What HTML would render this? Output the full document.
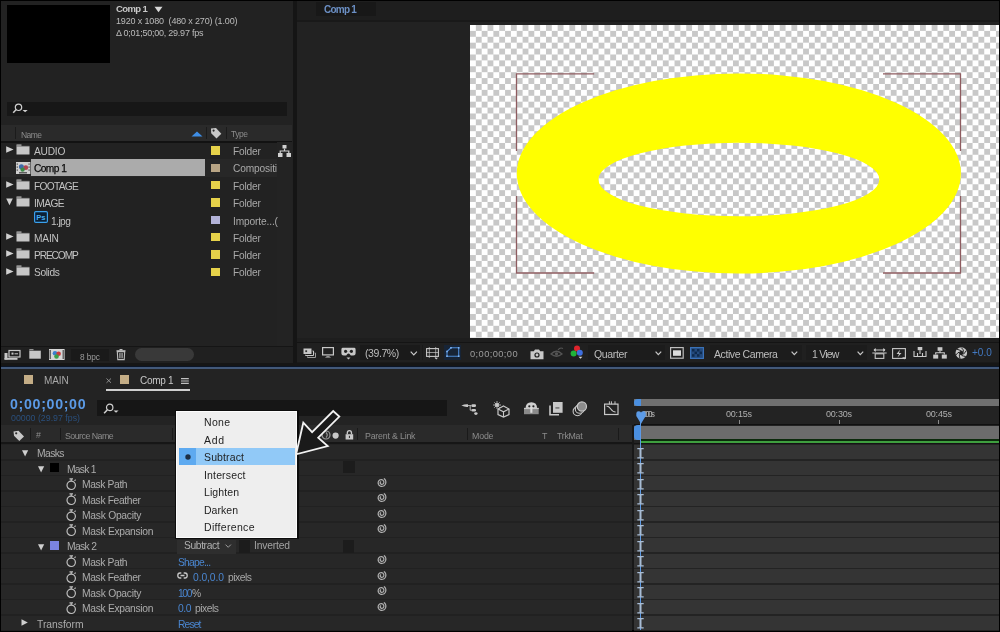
<!DOCTYPE html>
<html><head><meta charset="utf-8">
<style>
*{margin:0;padding:0;box-sizing:border-box}
html,body{width:1000px;height:632px;overflow:hidden;background:#000}
body{position:relative;font-family:"Liberation Sans",sans-serif;color:#b8b8b8}
.a{position:absolute}
.t{position:absolute;white-space:nowrap;line-height:1;will-change:transform}
svg{overflow:visible}
</style></head><body>
<div class="a" style="left:0px;top:0px;width:1000px;height:632px;background:#000;"></div>
<div class="a" style="left:1px;top:1px;width:998px;height:629px;background:#191919;"></div>
<div class="a" style="left:1px;top:1px;width:292px;height:365px;background:#222;"></div>
<div class="a" style="left:7px;top:5px;width:103px;height:58px;background:#000;"></div>
<div class="t" style="left:115.7px;top:3.96px;font-size:9.5px;color:#c8c8c8;font-weight:bold;letter-spacing:-0.609px;">Comp 1</div>
<svg class="a" style="left:154px;top:6px" width="9" height="7" viewBox="0 0 9 7"><path d="M0.5 0.8 L8.5 0.8 L4.5 6.3Z" fill="#d8d8d8"/></svg>
<div class="t" style="left:115.7px;top:17.48px;font-size:9px;color:#bcbcbc;letter-spacing:-0.153px;">1920 x 1080&nbsp; (480 x 270) (1.00)</div>
<div class="t" style="left:115.7px;top:29.28px;font-size:9px;color:#bcbcbc;letter-spacing:-0.232px;">&Delta; 0;01;50;00, 29.97 fps</div>
<div class="a" style="left:7px;top:101.5px;width:280px;height:14.6px;background:#171717;"></div>
<svg class="a" style="left:12px;top:103px" width="16" height="12" viewBox="0 0 16 12"><circle cx="6.5" cy="4.3" r="3.2" fill="none" stroke="#cfcfcf" stroke-width="1.2"/><path d="M4.2 6.6 L1.2 9.8" stroke="#cfcfcf" stroke-width="1.5"/><path d="M10.5 7 L15.7 7 L13.1 9.3Z" fill="#cfcfcf"/></svg>
<div class="a" style="left:1px;top:125px;width:291px;height:16px;background:#2a2a2a;"></div>
<div class="a" style="left:1px;top:141px;width:291px;height:1.5px;background:#121212;"></div>
<div class="a" style="left:15px;top:127px;width:1px;height:12px;background:#1b1b1b;"></div>
<div class="t" style="left:21px;top:130.50px;font-size:8.5px;color:#8c8c8c;letter-spacing:-0.562px;">Name</div>
<svg class="a" style="left:191px;top:131px" width="12" height="6" viewBox="0 0 12 6"><path d="M0.5 5.5 L6 0.5 L11.5 5.5Z" fill="#3f8ee6"/></svg>
<div class="a" style="left:205.5px;top:127px;width:1px;height:12px;background:#1b1b1b;"></div>
<svg class="a" style="left:210px;top:127px" width="12" height="12" viewBox="0 0 12 12"><path d="M1 1.5 L6 1 L11.3 6.8 L6.5 11.5 L1.2 6.2Z" fill="#c8c8c8"/><circle cx="3.6" cy="3.6" r="1.1" fill="#2a2a2a"/></svg>
<div class="a" style="left:225.5px;top:127px;width:1px;height:12px;background:#1b1b1b;"></div>
<div class="t" style="left:231px;top:129.60px;font-size:8.5px;color:#8c8c8c;letter-spacing:-0.479px;">Type</div>
<div class="a" style="left:277px;top:142px;width:15px;height:204px;background:#232323;"></div>
<svg class="a" style="left:5.5px;top:146.45000000000002px" width="8" height="8" viewBox="0 0 8 8"><path d="M0.2 0.3 L7.6 3.5 L0.2 6.7Z" fill="#d0d0d0"/></svg>
<svg class="a" style="left:16px;top:144.15px" width="14" height="11" viewBox="0 0 14 11"><path d="M0.5 0.5 H5.5 V2.2 H0.5Z" fill="#c6c6c6"/><rect x="0.5" y="2.2" width="13" height="8.3" fill="#c6c6c6"/><rect x="0.5" y="1.6" width="13" height="0.6" fill="#444"/></svg>
<div class="t" style="left:34.2px;top:146.97px;font-size:10.2px;color:#c2c2c2;letter-spacing:-0.241px;">AUDIO</div>
<div class="a" style="left:211px;top:146.45000000000002px;width:8.6px;height:8.4px;background:#e6d24a;"></div>
<div class="t" style="left:232.5px;top:146.97px;font-size:10.2px;color:#a8a8a8;letter-spacing:-0.198px;">Folder</div>
<div class="a" style="left:1px;top:159.3px;width:276px;height:17.3px;background:#272727;"></div>
<div class="a" style="left:31px;top:159.3px;width:174px;height:16.4px;background:#ababab;"></div>
<svg class="a" style="left:15.8px;top:161.8px" width="14.4" height="12" viewBox="0 0 14.4 12"><rect x="0" y="0" width="14.4" height="12" fill="#cfcfcf"/><g fill="#555"><rect x="0.6" y="1.5" width="1.4" height="1.2"/><rect x="0.6" y="4.5" width="1.4" height="1.2"/><rect x="0.6" y="7.5" width="1.4" height="1.2"/><rect x="12.4" y="1.5" width="1.4" height="1.2"/><rect x="12.4" y="4.5" width="1.4" height="1.2"/><rect x="12.4" y="7.5" width="1.4" height="1.2"/></g><circle cx="5.4" cy="4.7" r="2.5" fill="#3d6aa8"/><circle cx="9.8" cy="5.7" r="2.4" fill="#b04550"/><circle cx="6.6" cy="7.6" r="2.2" fill="#3c8a45"/><rect x="3" y="10.2" width="8" height="1.2" fill="#444"/></svg>
<div class="t" style="left:34.2px;top:164.27px;font-size:10.2px;color:#0a0a0a;-webkit-text-stroke:0.25px #0a0a0a;letter-spacing:-0.574px;">Comp 1</div>
<div class="a" style="left:211px;top:163.75000000000003px;width:8.6px;height:8.4px;background:#b9a585;"></div>
<div class="t" style="left:232.5px;top:164.27px;font-size:10.2px;color:#a8a8a8;letter-spacing:-0.150px;">Compositi</div>
<svg class="a" style="left:5.5px;top:181.05px" width="8" height="8" viewBox="0 0 8 8"><path d="M0.2 0.3 L7.6 3.5 L0.2 6.7Z" fill="#d0d0d0"/></svg>
<svg class="a" style="left:16px;top:178.75px" width="14" height="11" viewBox="0 0 14 11"><path d="M0.5 0.5 H5.5 V2.2 H0.5Z" fill="#c6c6c6"/><rect x="0.5" y="2.2" width="13" height="8.3" fill="#c6c6c6"/><rect x="0.5" y="1.6" width="13" height="0.6" fill="#444"/></svg>
<div class="t" style="left:34.2px;top:181.87px;font-size:10.2px;color:#c2c2c2;letter-spacing:-0.710px;">FOOTAGE</div>
<div class="a" style="left:211px;top:181.05px;width:8.6px;height:8.4px;background:#e6d24a;"></div>
<div class="t" style="left:232.5px;top:181.87px;font-size:10.2px;color:#a8a8a8;letter-spacing:-0.198px;">Folder</div>
<svg class="a" style="left:6px;top:198.05px" width="8" height="8" viewBox="0 0 8 8"><path d="M0.2 0.5 L6.8 0.5 L3.5 7.2Z" fill="#d0d0d0"/></svg>
<svg class="a" style="left:16px;top:196.05px" width="14" height="11" viewBox="0 0 14 11"><path d="M0.5 0.5 H5.5 V2.2 H0.5Z" fill="#c6c6c6"/><rect x="0.5" y="2.2" width="13" height="8.3" fill="#c6c6c6"/><rect x="0.5" y="1.6" width="13" height="0.6" fill="#444"/></svg>
<div class="t" style="left:34.2px;top:199.27px;font-size:10.2px;color:#c2c2c2;letter-spacing:-0.561px;">IMAGE</div>
<div class="a" style="left:211px;top:198.35000000000002px;width:8.6px;height:8.4px;background:#e6d24a;"></div>
<div class="t" style="left:232.5px;top:199.27px;font-size:10.2px;color:#a8a8a8;letter-spacing:-0.198px;">Folder</div>
<svg class="a" style="left:34px;top:211.2px" width="14" height="12" viewBox="0 0 14 12"><rect x="0.6" y="0.6" width="12.8" height="10.8" rx="1.2" fill="#0b2035" stroke="#3aa0ec" stroke-width="1.2"/><text x="2.2" y="8.9" font-size="7.6" font-family="Liberation Sans" font-weight="bold" fill="#48aef2">Ps</text></svg>
<div class="t" style="left:50.6px;top:216.57px;font-size:10.2px;color:#c2c2c2;letter-spacing:-0.548px;">1.jpg</div>
<div class="a" style="left:211px;top:215.65px;width:8.6px;height:8.4px;background:#b3b3d8;"></div>
<div class="t" style="left:232.5px;top:216.57px;font-size:10.2px;color:#a8a8a8;letter-spacing:-0.142px;">Importe...(</div>
<svg class="a" style="left:5.5px;top:232.95000000000002px" width="8" height="8" viewBox="0 0 8 8"><path d="M0.2 0.3 L7.6 3.5 L0.2 6.7Z" fill="#d0d0d0"/></svg>
<svg class="a" style="left:16px;top:230.65px" width="14" height="11" viewBox="0 0 14 11"><path d="M0.5 0.5 H5.5 V2.2 H0.5Z" fill="#c6c6c6"/><rect x="0.5" y="2.2" width="13" height="8.3" fill="#c6c6c6"/><rect x="0.5" y="1.6" width="13" height="0.6" fill="#444"/></svg>
<div class="t" style="left:34.2px;top:233.87px;font-size:10.2px;color:#c2c2c2;letter-spacing:-0.190px;">MAIN</div>
<div class="a" style="left:211px;top:232.95000000000002px;width:8.6px;height:8.4px;background:#e6d24a;"></div>
<div class="t" style="left:232.5px;top:233.87px;font-size:10.2px;color:#a8a8a8;letter-spacing:-0.198px;">Folder</div>
<svg class="a" style="left:5.5px;top:250.25000000000003px" width="8" height="8" viewBox="0 0 8 8"><path d="M0.2 0.3 L7.6 3.5 L0.2 6.7Z" fill="#d0d0d0"/></svg>
<svg class="a" style="left:16px;top:247.95000000000002px" width="14" height="11" viewBox="0 0 14 11"><path d="M0.5 0.5 H5.5 V2.2 H0.5Z" fill="#c6c6c6"/><rect x="0.5" y="2.2" width="13" height="8.3" fill="#c6c6c6"/><rect x="0.5" y="1.6" width="13" height="0.6" fill="#444"/></svg>
<div class="t" style="left:34.2px;top:251.17px;font-size:10.2px;color:#c2c2c2;letter-spacing:-1.119px;">PRECOMP</div>
<div class="a" style="left:211px;top:250.25000000000003px;width:8.6px;height:8.4px;background:#e6d24a;"></div>
<div class="t" style="left:232.5px;top:251.17px;font-size:10.2px;color:#a8a8a8;letter-spacing:-0.198px;">Folder</div>
<svg class="a" style="left:5.5px;top:267.55px" width="8" height="8" viewBox="0 0 8 8"><path d="M0.2 0.3 L7.6 3.5 L0.2 6.7Z" fill="#d0d0d0"/></svg>
<svg class="a" style="left:16px;top:265.25px" width="14" height="11" viewBox="0 0 14 11"><path d="M0.5 0.5 H5.5 V2.2 H0.5Z" fill="#c6c6c6"/><rect x="0.5" y="2.2" width="13" height="8.3" fill="#c6c6c6"/><rect x="0.5" y="1.6" width="13" height="0.6" fill="#444"/></svg>
<div class="t" style="left:34.2px;top:268.47px;font-size:10.2px;color:#c2c2c2;letter-spacing:-0.390px;">Solids</div>
<div class="a" style="left:211px;top:267.55px;width:8.6px;height:8.4px;background:#e6d24a;"></div>
<div class="t" style="left:232.5px;top:268.47px;font-size:10.2px;color:#a8a8a8;letter-spacing:-0.198px;">Folder</div>
<svg class="a" style="left:278px;top:144.6px" width="13" height="12" viewBox="0 0 13 12"><rect x="4.5" y="0" width="4" height="3.5" fill="#d0d0d0"/><rect x="0" y="8" width="4.5" height="4" fill="#d0d0d0"/><rect x="8.5" y="8" width="4.5" height="4" fill="#d0d0d0"/><path d="M6.5 3.5 V6 M2.2 8 V6 H10.8 V8" stroke="#d0d0d0" stroke-width="1.2" fill="none"/></svg>
<div class="a" style="left:1px;top:346px;width:292px;height:1.2px;background:#151515;"></div>
<div class="a" style="left:1px;top:347px;width:292px;height:16px;background:#202020;"></div>
<svg class="a" style="left:3.6px;top:350px" width="17" height="10" viewBox="0 0 17 10"><rect x="5" y="0.5" width="11" height="6.5" fill="none" stroke="#c8c8c8" stroke-width="1.2"/><rect x="7.5" y="2.6" width="2" height="2" fill="#c8c8c8"/><rect x="10.5" y="3.3" width="3.5" height="1" fill="#c8c8c8"/><rect x="0.5" y="3" width="3" height="6.5" fill="#c8c8c8"/><rect x="0.5" y="8" width="13" height="1.8" fill="#c8c8c8"/></svg>
<svg class="a" style="left:28.8px;top:349.4px" width="12" height="10" viewBox="0 0 12 10"><path d="M0.3 0.3 H4.5 V1.5 H0.3Z" fill="#c8c8c8"/><rect x="0.3" y="1.5" width="11.5" height="8.2" fill="#c8c8c8"/><rect x="0.3" y="1.3" width="11.5" height="0.5" fill="#333"/></svg>
<svg class="a" style="left:49.2px;top:349px" width="16" height="11" viewBox="0 0 16 11"><rect x="0" y="0" width="15.6" height="11" fill="#d6d6d6"/><rect x="0.5" y="1" width="1.5" height="9" fill="#666"/><rect x="13.5" y="1" width="1.5" height="9" fill="#666"/><circle cx="6" cy="4.3" r="2.3" fill="#3a7fd0"/><circle cx="9.6" cy="4.8" r="2.3" fill="#cc3b3b"/><circle cx="7.5" cy="7.5" r="2.3" fill="#3aa04a"/></svg>
<div class="a" style="left:71.4px;top:348.8px;width:38px;height:12px;background:#1a1a1a;"></div>
<div class="t" style="left:79.8px;top:353.17px;font-size:8.3px;color:#9a9a9a;letter-spacing:-0.124px;">8 bpc</div>
<svg class="a" style="left:116px;top:349px" width="10" height="11" viewBox="0 0 10 11"><rect x="0.5" y="1.2" width="9" height="1.2" fill="#bdbdbd"/><rect x="3.5" y="0" width="3" height="1.4" fill="#bdbdbd"/><path d="M1.3 2.6 H8.7 L8.2 10.6 H1.8Z" fill="none" stroke="#bdbdbd" stroke-width="1.1"/><path d="M3.7 4 V9.3 M5 4 V9.3 M6.3 4 V9.3" stroke="#bdbdbd" stroke-width="0.8"/></svg>
<div class="a" style="left:135px;top:348px;width:59px;height:13px;background:#393939;border-radius:6.5px;"></div>
<div class="a" style="left:293px;top:1px;width:4px;height:365px;background:#151515;"></div>
<div class="a" style="left:297px;top:1px;width:702px;height:365px;background:#222;"></div>
<div class="a" style="left:297px;top:1px;width:702px;height:19px;background:#1e1e1e;"></div>
<div class="a" style="left:297px;top:20px;width:702px;height:2px;background:#191919;"></div>
<div class="a" style="left:316px;top:1.5px;width:60px;height:14px;background:#181818;"></div>
<div class="t" style="left:323.7px;top:4.84px;font-size:10px;color:#6b8fc4;font-weight:bold;letter-spacing:-0.754px;">Comp 1</div>
<div class="a" style="left:469.5px;top:25px;width:529.5px;height:313px;background:#fff;background-image:conic-gradient(#c8c8c8 0 25%,#fff 0 50%,#c8c8c8 0 75%,#fff 0);background-size:11.7px 11.8px;background-position:0 0;"></div>
<svg class="a" style="left:0px;top:0px" width="1000" height="632" viewBox="0 0 1000 632"><g fill="none" stroke="#8e5c60" stroke-width="1.3">
<path d="M516.5 151 V73.9 H594.2"/><path d="M883 73.9 H960.5 V151"/>
<path d="M516.5 196 V273 H594.2"/><path d="M883 273 H960.5 V196"/></g>
<path fill="#ffff00" fill-rule="evenodd" d="M516.8 173.5 A222 100 0 1 0 960.9 173.5 A222 100 0 1 0 516.8 173.5Z M598.4 179.5 A140.45 36.8 0 1 0 879.3 179.5 A140.45 36.8 0 1 0 598.4 179.5Z"/></svg>
<div class="a" style="left:297px;top:338px;width:702px;height:4px;background:#1e1e1e;"></div>
<div class="a" style="left:297px;top:341.5px;width:702px;height:1.5px;background:#141414;"></div>
<div class="a" style="left:297px;top:343px;width:702px;height:19px;background:#202020;"></div>
<div class="a" style="left:297px;top:362px;width:702px;height:4px;background:#1a1a1a;"></div>
<svg class="a" style="left:302.5px;top:347.5px" width="13" height="10" viewBox="0 0 13 10"><rect x="0.5" y="0.5" width="8" height="5.5" fill="#c8c8c8"/><rect x="2.3" y="2.3" width="1.8" height="1.8" fill="#333"/><path d="M9.5 3 H10.5 V7.5 H2.5 V6.8" fill="none" stroke="#c8c8c8" stroke-width="1"/><path d="M11.5 5 H12.5 V9.5 H4.5 V8.5" fill="none" stroke="#9a9a9a" stroke-width="1"/></svg>
<svg class="a" style="left:322px;top:346.5px" width="12" height="11" viewBox="0 0 12 11"><rect x="0.6" y="0.6" width="10.8" height="7.3" fill="none" stroke="#c8c8c8" stroke-width="1.2"/><path d="M3 10.5 Q6 8.2 9 10.5Z" fill="#c8c8c8"/></svg>
<svg class="a" style="left:341px;top:347px" width="15" height="13" viewBox="0 0 15 13"><path d="M1.5 0.8 H13.5 Q14.6 0.8 14.6 2.5 V6.5 Q14.6 8.6 12.3 8.6 H9.8 L8.8 7.2 Q7.5 6 6.2 7.2 L5.2 8.6 H2.7 Q0.4 8.6 0.4 6.5 V2.5 Q0.4 0.8 1.5 0.8Z" fill="#c8c8c8"/><circle cx="4.6" cy="4.3" r="1.6" fill="#222"/><circle cx="10.4" cy="4.3" r="1.6" fill="#222"/><path d="M5.5 10.6 H9.5 L7.5 12.6Z" fill="#c8c8c8"/></svg>
<div class="a" style="left:359.8px;top:345.2px;width:60.6px;height:15px;background:#1a1a1a;"></div>
<div class="t" style="left:364.6px;top:348.31px;font-size:10.5px;color:#bdbdbd;letter-spacing:-0.428px;">(39.7%)</div>
<svg class="a" style="left:410px;top:351px" width="8" height="5" viewBox="0 0 8 5"><path d="M0.7 0.7 L3.8 3.8 L6.9 0.7" fill="none" stroke="#c8c8c8" stroke-width="1.2"/></svg>
<div class="a" style="left:422px;top:345px;width:1px;height:15px;background:#1a1a1a;"></div>
<svg class="a" style="left:425.8px;top:347px" width="13" height="13" viewBox="0 0 13 13"><rect x="0.6" y="1.6" width="11.8" height="7.8" fill="none" stroke="#c8c8c8" stroke-width="1.1"/><path d="M3.3 0 V11 M9.7 0 V11 M0 5.5 H13" stroke="#c8c8c8" stroke-width="0.7" fill="none"/><path d="M8.5 10.8 H12 L10.25 12.6Z" fill="#c8c8c8"/></svg>
<div class="a" style="left:443.8px;top:345.2px;width:17.4px;height:15px;background:#172436;"></div>
<svg class="a" style="left:446px;top:347px" width="14" height="10" viewBox="0 0 14 10"><path d="M1 9.2 V4.5 L5 0.8 H12.7 V9.2Z" fill="none" stroke="#4c8ad8" stroke-width="1.1"/><g fill="#7fb4f0"><rect x="0.2" y="8.4" width="1.6" height="1.6"/><rect x="0.2" y="3.7" width="1.6" height="1.6"/><rect x="4.2" y="0" width="1.6" height="1.6"/><rect x="11.9" y="0" width="1.6" height="1.6"/><rect x="11.9" y="8.4" width="1.6" height="1.6"/></g></svg>
<div class="t" style="left:469.9px;top:349.73px;font-size:9.3px;color:#9c9c9c;letter-spacing:0.405px;">0;00;00;00</div>
<svg class="a" style="left:530px;top:348.5px" width="14" height="10.5" viewBox="0 0 14 10.5"><path d="M0.5 2.3 H3.8 L5 0.5 H9 L10.2 2.3 H13.5 V10.2 H0.5Z" fill="#c8c8c8"/><circle cx="7" cy="6" r="2.6" fill="#202020"/><circle cx="7" cy="6" r="1.4" fill="#c8c8c8"/></svg>
<svg class="a" style="left:549.7px;top:347px" width="14" height="11" viewBox="0 0 14 11"><path d="M1 7 Q6.5 1.5 12 7 Q6.5 11.5 1 7Z" fill="none" stroke="#555" stroke-width="1.3"/><circle cx="6.5" cy="6.8" r="1.6" fill="#555"/><path d="M8 3 Q10 0 13 1.5" fill="none" stroke="#555" stroke-width="1.2"/></svg>
<svg class="a" style="left:570px;top:345px" width="14" height="14" viewBox="0 0 14 14"><circle cx="7" cy="3.6" r="3" fill="#e0242c"/><circle cx="3.6" cy="8.4" r="3" fill="#21b339"/><circle cx="9.8" cy="7.8" r="3" fill="#3f6fe0"/><path d="M8.6 11.8 H12.4 L10.5 13.8Z" fill="#d8d8d8"/></svg>
<div class="a" style="left:587.8px;top:345px;width:77px;height:14.7px;background:#1c1c1c;"></div>
<div class="t" style="left:594.1px;top:348.71px;font-size:10.5px;color:#bdbdbd;letter-spacing:-0.335px;">Quarter</div>
<svg class="a" style="left:655px;top:351.3px" width="7" height="5" viewBox="0 0 7 5"><path d="M0.6 0.6 L3.3 3.6 L6.2 0.6" fill="none" stroke="#c8c8c8" stroke-width="1.2"/></svg>
<svg class="a" style="left:669.7px;top:347.1px" width="14" height="12" viewBox="0 0 14 12"><rect x="0.6" y="0.6" width="12.6" height="10.6" fill="none" stroke="#bdbdbd" stroke-width="1.2"/><rect x="3" y="3.3" width="8" height="5.5" fill="#dcdcdc"/></svg>
<svg class="a" style="left:690px;top:347px" width="14" height="12" viewBox="0 0 14 12"><rect x="0" y="0" width="14" height="12" fill="#244a7c"/><rect x="0.6" y="0.6" width="12.8" height="10.8" fill="none" stroke="#3c74bc" stroke-width="1.1"/><g fill="#0e2a4e"><rect x="2" y="2" width="2.5" height="2.5"/><rect x="7" y="2" width="2.5" height="2.5"/><rect x="4.5" y="4.6" width="2.5" height="2.5"/><rect x="9.5" y="4.6" width="2.5" height="2.5"/><rect x="2" y="7.2" width="2.5" height="2.5"/><rect x="7" y="7.2" width="2.5" height="2.5"/></g></svg>
<div class="a" style="left:710px;top:344.8px;width:92px;height:15.2px;background:#1c1c1c;"></div>
<div class="t" style="left:713.5px;top:348.71px;font-size:10.5px;color:#bdbdbd;letter-spacing:-0.422px;">Active Camera</div>
<svg class="a" style="left:791px;top:351.3px" width="7" height="5" viewBox="0 0 7 5"><path d="M0.6 0.6 L3.3 3.6 L6.2 0.6" fill="none" stroke="#c8c8c8" stroke-width="1.2"/></svg>
<div class="a" style="left:806px;top:344.8px;width:60.6px;height:15.2px;background:#1c1c1c;"></div>
<div class="t" style="left:812px;top:348.71px;font-size:10.5px;color:#bdbdbd;letter-spacing:-0.786px;">1 View</div>
<svg class="a" style="left:857.2px;top:351.3px" width="7" height="5" viewBox="0 0 7 5"><path d="M0.6 0.6 L3.3 3.6 L6.2 0.6" fill="none" stroke="#c8c8c8" stroke-width="1.2"/></svg>
<svg class="a" style="left:872.2px;top:347.6px" width="15" height="11" viewBox="0 0 15 11"><path d="M2 2 H13 M2 2 L3.8 0.6 M2 2 L3.8 3.4 M13 2 L11.2 0.6 M13 2 L11.2 3.4" stroke="#c8c8c8" stroke-width="1.1" fill="none"/><path d="M0.3 5 H14.7" stroke="#c8c8c8" stroke-width="1"/><rect x="3.2" y="5.8" width="8.6" height="4.6" fill="none" stroke="#c8c8c8" stroke-width="1.1"/></svg>
<svg class="a" style="left:892px;top:347.6px" width="15" height="12" viewBox="0 0 15 12"><rect x="0.6" y="0.6" width="12.8" height="9.8" fill="none" stroke="#c8c8c8" stroke-width="1.1"/><path d="M8 1.8 L4.5 6 H7 L5.5 9.5 L9.5 5 H7Z" fill="#c8c8c8"/><path d="M10.2 9.2 H14.2 L12.2 11.4Z" fill="#c8c8c8"/></svg>
<svg class="a" style="left:912.6px;top:347.2px" width="14" height="11" viewBox="0 0 14 11"><rect x="4.7" y="0" width="4.6" height="3.2" fill="#c8c8c8"/><path d="M7 3.2 V7 M1 4 V9.5 H13 V4 M4.5 6 V9.5 M9.5 6 V9.5" stroke="#c8c8c8" stroke-width="1.1" fill="none"/></svg>
<svg class="a" style="left:933px;top:346.6px" width="14" height="12" viewBox="0 0 14 12"><rect x="4.6" y="0.2" width="4.8" height="3.6" fill="#c8c8c8"/><rect x="0.2" y="7.6" width="5" height="4" fill="#c8c8c8"/><rect x="8.8" y="7.6" width="5" height="4" fill="#c8c8c8"/><path d="M7 3.8 V5.7 M2.7 7.6 V5.7 H11.3 V7.6" stroke="#c8c8c8" stroke-width="1.1" fill="none"/></svg>
<svg class="a" style="left:955px;top:347.4px" width="13" height="12" viewBox="0 0 13 12"><circle cx="6.3" cy="6" r="5.8" fill="#c8c8c8"/><g fill="none" stroke="#202020" stroke-width="1"><path d="M6.3 0.6 Q8.6 2.6 8.6 4.6"/><path d="M11.3 3.5 Q10.2 6 8.4 7"/><path d="M10.8 9.5 Q8.2 9.2 6.6 8.4"/><path d="M5 11.5 Q4.2 9 4.3 7.6"/><path d="M0.8 8 Q2.6 5.8 4 5.2"/><path d="M1.8 2.2 Q4.4 3 5.8 3.6"/></g><path d="M6.3 3.6 L8.6 4.8 L8.5 7.1 L6.5 8.3 L4.2 7.4 L4.1 5Z" fill="#202020"/></svg>
<div class="t" style="left:972px;top:348.34px;font-size:10px;color:#4279c2;letter-spacing:0.017px;">+0.0</div>
<div class="a" style="left:1px;top:363px;width:998px;height:2.7px;background:#161616;"></div>
<div class="a" style="left:1px;top:365.7px;width:998px;height:1.2px;background:#0b1526;"></div>
<div class="a" style="left:1px;top:366.9px;width:998px;height:1.7px;background:#43597a;"></div>
<div class="a" style="left:1px;top:368.9px;width:998px;height:2.5px;background:#1d1f23;"></div>
<div class="a" style="left:1px;top:368.5px;width:998px;height:261.5px;background:#232323;"></div>
<div class="a" style="left:24px;top:375px;width:9.2px;height:9px;background:#c4ad86;"></div>
<div class="t" style="left:44.4px;top:375.94px;font-size:10px;color:#a8a8a8;letter-spacing:-0.133px;">MAIN</div>
<svg class="a" style="left:105.8px;top:378.2px" width="6" height="5" viewBox="0 0 6 5"><path d="M0.5 0.5 L5 4.8 M5 0.5 L0.5 4.8" stroke="#9a9a9a" stroke-width="0.9"/></svg>
<div class="a" style="left:120px;top:375px;width:9.2px;height:9px;background:#c4ad86;"></div>
<div class="t" style="left:140px;top:375.54px;font-size:10px;color:#c8c8c8;letter-spacing:-0.283px;">Comp 1</div>
<svg class="a" style="left:181.4px;top:378.2px" width="8" height="6" viewBox="0 0 8 6"><path d="M0 0.6 H7.8 M0 3 H7.8 M0 5.4 H7.8" stroke="#c0c0c0" stroke-width="1.1"/></svg>
<div class="a" style="left:105.8px;top:389.2px;width:84.6px;height:2px;background:#cfcfcf;"></div>
<div class="t" style="left:10.2px;top:396.98px;font-size:14.2px;color:#5b9ae6;font-weight:bold;letter-spacing:0.686px;">0;00;00;00</div>
<div class="t" style="left:10.8px;top:413.55px;font-size:8.8px;color:#2a4f7c;letter-spacing:0.002px;">00000 (29.97 fps)</div>
<div class="a" style="left:96.6px;top:400.2px;width:350.4px;height:16.2px;background:#161616;"></div>
<svg class="a" style="left:102.6px;top:402.6px" width="16" height="11" viewBox="0 0 16 11"><circle cx="6.7" cy="4.4" r="3.2" fill="none" stroke="#cfcfcf" stroke-width="1.2"/><path d="M4.4 6.7 L1.1 10.3" stroke="#cfcfcf" stroke-width="1.5"/><path d="M10.5 7.4 L15.6 7.4 L13.05 9.7Z" fill="#cfcfcf"/></svg>
<svg class="a" style="left:461px;top:403px" width="18" height="13" viewBox="0 0 18 13"><path d="M0.4 2.6 Q4 0.9 7 1.3 V3.9 Q4 4.3 0.4 2.6Z" fill="#c8c8c8"/><rect x="10.4" y="1.3" width="4.6" height="2.6" rx="1.2" fill="#c8c8c8"/><path d="M7 2.6 H10.4 M9.2 2.6 V7.2 H10.4" stroke="#c8c8c8" stroke-width="0.9" fill="none"/><rect x="10.4" y="5.9" width="4.6" height="2.6" rx="1.2" fill="#c8c8c8"/><ellipse cx="14.9" cy="10.6" rx="1.7" ry="1.3" fill="#c8c8c8"/></svg>
<svg class="a" style="left:492.8px;top:400.7px" width="17" height="16" viewBox="0 0 17 16"><circle cx="4" cy="4" r="2" fill="#c8c8c8"/><path d="M4 0 V8 M0 4 H8 M1.3 1.3 L6.7 6.7 M6.7 1.3 L1.3 6.7" stroke="#c8c8c8" stroke-width="0.8"/><path d="M10.5 5 L16 8 V13.5 L10.5 16 L5 13.5 V8Z" fill="none" stroke="#c8c8c8" stroke-width="1.2"/><path d="M5 8 L10.5 10.8 L16 8 M10.5 10.8 V16" fill="none" stroke="#c8c8c8" stroke-width="1.1"/></svg>
<svg class="a" style="left:524.4px;top:401.8px" width="15" height="13" viewBox="0 0 15 13"><path d="M1.6 6.3 Q1.6 0.3 7.35 0.3 Q13.1 0.3 13.1 6.3Z" fill="#d0d0d0"/><circle cx="5.3" cy="4.3" r="1.1" fill="#232323"/><circle cx="9.4" cy="4.3" r="1.1" fill="#232323"/><rect x="0" y="5.9" width="14.7" height="6.3" fill="#8a8a8a"/><rect x="0" y="5.9" width="14.7" height="1.2" fill="#c8c8c8"/><rect x="6.3" y="5" width="2.1" height="5.8" fill="#dadada"/></svg>
<svg class="a" style="left:549px;top:401.5px" width="14" height="14" viewBox="0 0 14 14"><path d="M1 3.5 V12.8 H10" fill="none" stroke="#c8c8c8" stroke-width="1.6"/><rect x="4" y="0" width="9.6" height="10.8" fill="#c8c8c8"/><rect x="6.4" y="5.5" width="4" height="0.9" fill="#333"/></svg>
<svg class="a" style="left:571.5px;top:400.5px" width="16" height="16" viewBox="0 0 16 16"><circle cx="5.5" cy="10.3" r="4.4" fill="#232323" stroke="#c8c8c8" stroke-width="1.1"/><circle cx="7.7" cy="7.9" r="4.4" fill="#232323" stroke="#c8c8c8" stroke-width="1.1"/><circle cx="9.9" cy="5.5" r="4.6" fill="#8c8c8c" stroke="#c8c8c8" stroke-width="1.2"/></svg>
<svg class="a" style="left:604px;top:401px" width="15" height="14" viewBox="0 0 15 14"><rect x="0.6" y="3.1" width="13.4" height="10.4" fill="none" stroke="#c8c8c8" stroke-width="1.2"/><path d="M5.4 0.3 V3.3 M7.4 0.3 V3.3 M11 0.3 V3.3" stroke="#c8c8c8" stroke-width="1"/><path d="M2.4 5 Q4.8 5 6.6 7.8 Q8.6 11 11.6 11" fill="none" stroke="#c8c8c8" stroke-width="1.1"/></svg>
<div class="a" style="left:1px;top:425px;width:632px;height:17px;background:#2a2a2a;"></div>
<div class="a" style="left:1px;top:442px;width:632px;height:2px;background:#161616;"></div>
<svg class="a" style="left:13px;top:430px" width="12" height="11" viewBox="0 0 12 11"><path d="M0.5 1.5 L5.5 0.8 L11 6.5 L6.3 11 L1 5.8Z" fill="#c8c8c8"/><circle cx="3.2" cy="3.3" r="1.1" fill="#2a2a2a"/></svg>
<div class="a" style="left:30px;top:428px;width:1px;height:12px;background:#1a1a1a;"></div>
<div class="t" style="left:35.6px;top:431.15px;font-size:8.8px;color:#8c8c8c;letter-spacing:-1.306px;">#</div>
<div class="a" style="left:60px;top:428px;width:1px;height:12px;background:#1a1a1a;"></div>
<div class="t" style="left:65px;top:431.55px;font-size:8.8px;color:#8c8c8c;letter-spacing:-0.520px;">Source Name</div>
<div class="a" style="left:172.4px;top:428px;width:1px;height:12px;background:#1a1a1a;"></div>
<svg class="a" style="left:321px;top:430px" width="10" height="10" viewBox="0 0 10 10"><circle cx="5" cy="5" r="4" fill="none" stroke="#9a9a9a" stroke-width="1.2"/><path d="M5 2.5 Q7.5 5 5 7.5" stroke="#9a9a9a" stroke-width="1.1" fill="none"/></svg>
<svg class="a" style="left:331.5px;top:431.5px" width="8" height="8" viewBox="0 0 8 8"><circle cx="3.6" cy="3.6" r="3.1" fill="#c8c8c8"/></svg>
<svg class="a" style="left:345.3px;top:430px" width="9" height="10" viewBox="0 0 9 10"><path d="M2.3 4.2 V3 Q2.3 0.7 4.4 0.7 Q6.5 0.7 6.5 3 V4.2" fill="none" stroke="#c8c8c8" stroke-width="1.3"/><rect x="0.6" y="4.2" width="7.6" height="5.3" fill="#c8c8c8"/><rect x="3.9" y="5.8" width="1" height="2.2" fill="#2a2a2a"/></svg>
<div class="a" style="left:357px;top:428px;width:1px;height:12px;background:#1a1a1a;"></div>
<div class="t" style="left:365px;top:431.55px;font-size:8.8px;color:#8c8c8c;letter-spacing:-0.193px;">Parent &amp; Link</div>
<div class="a" style="left:466.7px;top:428px;width:1px;height:12px;background:#1a1a1a;"></div>
<div class="t" style="left:471.9px;top:431.55px;font-size:8.8px;color:#8c8c8c;letter-spacing:-0.172px;">Mode</div>
<div class="t" style="left:542px;top:431.55px;font-size:8.8px;color:#8c8c8c;letter-spacing:-0.375px;">T</div>
<div class="t" style="left:557.4px;top:431.55px;font-size:8.8px;color:#8c8c8c;letter-spacing:-0.289px;">TrkMat</div>
<div class="a" style="left:618.2px;top:428px;width:1px;height:12px;background:#1a1a1a;"></div>
<div class="a" style="left:632px;top:425px;width:2.3px;height:205px;background:#181818;"></div>
<div class="a" style="left:634.3px;top:393px;width:364.7px;height:237px;background:#232323;"></div>
<div class="a" style="left:634px;top:398.6px;width:365px;height:7.5px;background:#707070;"></div>
<div class="a" style="left:634px;top:398.8px;width:6.5px;height:7.2px;background:#4a8fe0;border-radius:3.6px 0 0 3.6px;"></div>
<div class="t" style="left:726px;top:409.98px;font-size:9px;color:#b0b0b0;letter-spacing:-0.206px;">00:15s</div>
<div class="a" style="left:738.5px;top:419.5px;width:1px;height:4px;background:#8a8a8a;"></div>
<div class="t" style="left:826px;top:409.98px;font-size:9px;color:#b0b0b0;letter-spacing:-0.206px;">00:30s</div>
<div class="a" style="left:838.5px;top:419.5px;width:1px;height:4px;background:#8a8a8a;"></div>
<div class="t" style="left:925.5px;top:409.98px;font-size:9px;color:#b0b0b0;letter-spacing:-0.206px;">00:45s</div>
<div class="a" style="left:938.0px;top:419.5px;width:1px;height:4px;background:#8a8a8a;"></div>
<div class="t" style="left:641.5px;top:409.98px;font-size:9px;color:#b0b0b0;letter-spacing:-2.258px;">0:00s</div>
<div class="a" style="left:634px;top:423.6px;width:365px;height:1.6px;background:#111;"></div>
<div class="a" style="left:634px;top:425.5px;width:365px;height:14px;background:#6c6c6c;"></div>
<div class="a" style="left:634px;top:425.3px;width:6.5px;height:14.5px;background:#4a8fe0;border-radius:4px 0 0 4px;"></div>
<div class="a" style="left:640px;top:439.4px;width:359px;height:4.2px;background:#0c2a0c;"></div>
<div class="a" style="left:640px;top:440.5px;width:359px;height:2.1px;background:#3f9f3f;"></div>
<div class="a" style="left:634px;top:443px;width:365px;height:1.2px;background:#141414;"></div>
<div class="a" style="left:634.3px;top:445.2px;width:364.7px;height:14px;background:#343434;"></div>
<div class="a" style="left:634.3px;top:459.2px;width:364.7px;height:1.5px;background:#232323;"></div>
<div class="a" style="left:634.3px;top:460.7px;width:364.7px;height:14px;background:#343434;"></div>
<div class="a" style="left:634.3px;top:474.7px;width:364.7px;height:1.5px;background:#232323;"></div>
<div class="a" style="left:634.3px;top:476.2px;width:364.7px;height:14px;background:#343434;"></div>
<div class="a" style="left:634.3px;top:490.2px;width:364.7px;height:1.5px;background:#232323;"></div>
<div class="a" style="left:634.3px;top:491.7px;width:364.7px;height:14px;background:#343434;"></div>
<div class="a" style="left:634.3px;top:505.7px;width:364.7px;height:1.5px;background:#232323;"></div>
<div class="a" style="left:634.3px;top:507.2px;width:364.7px;height:14px;background:#343434;"></div>
<div class="a" style="left:634.3px;top:521.2px;width:364.7px;height:1.5px;background:#232323;"></div>
<div class="a" style="left:634.3px;top:522.7px;width:364.7px;height:14px;background:#343434;"></div>
<div class="a" style="left:634.3px;top:536.7px;width:364.7px;height:1.5px;background:#232323;"></div>
<div class="a" style="left:634.3px;top:538.2px;width:364.7px;height:14px;background:#343434;"></div>
<div class="a" style="left:634.3px;top:552.2px;width:364.7px;height:1.5px;background:#232323;"></div>
<div class="a" style="left:634.3px;top:553.7px;width:364.7px;height:14px;background:#343434;"></div>
<div class="a" style="left:634.3px;top:567.7px;width:364.7px;height:1.5px;background:#232323;"></div>
<div class="a" style="left:634.3px;top:569.2px;width:364.7px;height:14px;background:#343434;"></div>
<div class="a" style="left:634.3px;top:583.2px;width:364.7px;height:1.5px;background:#232323;"></div>
<div class="a" style="left:634.3px;top:584.7px;width:364.7px;height:14px;background:#343434;"></div>
<div class="a" style="left:634.3px;top:598.7px;width:364.7px;height:1.5px;background:#232323;"></div>
<div class="a" style="left:634.3px;top:600.2px;width:364.7px;height:14px;background:#343434;"></div>
<div class="a" style="left:634.3px;top:614.2px;width:364.7px;height:1.5px;background:#232323;"></div>
<div class="a" style="left:634.3px;top:615.7px;width:364.7px;height:14px;background:#343434;"></div>
<div class="a" style="left:634.3px;top:629.7px;width:364.7px;height:1.5px;background:#232323;"></div>
<div class="a" style="left:640px;top:418px;width:1px;height:212px;background:#5b9ae6;"></div>
<svg class="a" style="left:635.5px;top:410.5px" width="10" height="14" viewBox="0 0 10 14"><path d="M0.3 2.5 Q0.3 0.2 2.5 0.2 Q4.5 0.2 5 1.5 Q5.5 0.2 7.5 0.2 Q9.7 0.2 9.7 2.5 V5 L5 12.8 L0.3 5Z" fill="#5b9ae6"/></svg>
<svg class="a" style="left:637px;top:447.5px" width="7" height="11" viewBox="0 0 7 11"><path d="M0.3 0.6 H6.7 M0.3 9.8 H6.7" stroke="#a8bcd4" stroke-width="1.2"/><rect x="2.5" y="0.6" width="2" height="9.2" fill="#a8bcd4"/></svg>
<svg class="a" style="left:637px;top:463.0px" width="7" height="11" viewBox="0 0 7 11"><path d="M0.3 0.6 H6.7 M0.3 9.8 H6.7" stroke="#a8bcd4" stroke-width="1.2"/><rect x="2.5" y="0.6" width="2" height="9.2" fill="#a8bcd4"/></svg>
<svg class="a" style="left:637px;top:478.5px" width="7" height="11" viewBox="0 0 7 11"><path d="M0.3 0.6 H6.7 M0.3 9.8 H6.7" stroke="#a8bcd4" stroke-width="1.2"/><rect x="2.5" y="0.6" width="2" height="9.2" fill="#a8bcd4"/></svg>
<svg class="a" style="left:637px;top:494.0px" width="7" height="11" viewBox="0 0 7 11"><path d="M0.3 0.6 H6.7 M0.3 9.8 H6.7" stroke="#a8bcd4" stroke-width="1.2"/><rect x="2.5" y="0.6" width="2" height="9.2" fill="#a8bcd4"/></svg>
<svg class="a" style="left:637px;top:509.5px" width="7" height="11" viewBox="0 0 7 11"><path d="M0.3 0.6 H6.7 M0.3 9.8 H6.7" stroke="#a8bcd4" stroke-width="1.2"/><rect x="2.5" y="0.6" width="2" height="9.2" fill="#a8bcd4"/></svg>
<svg class="a" style="left:637px;top:525.0px" width="7" height="11" viewBox="0 0 7 11"><path d="M0.3 0.6 H6.7 M0.3 9.8 H6.7" stroke="#a8bcd4" stroke-width="1.2"/><rect x="2.5" y="0.6" width="2" height="9.2" fill="#a8bcd4"/></svg>
<svg class="a" style="left:637px;top:540.5px" width="7" height="11" viewBox="0 0 7 11"><path d="M0.3 0.6 H6.7 M0.3 9.8 H6.7" stroke="#a8bcd4" stroke-width="1.2"/><rect x="2.5" y="0.6" width="2" height="9.2" fill="#a8bcd4"/></svg>
<svg class="a" style="left:637px;top:556.0px" width="7" height="11" viewBox="0 0 7 11"><path d="M0.3 0.6 H6.7 M0.3 9.8 H6.7" stroke="#a8bcd4" stroke-width="1.2"/><rect x="2.5" y="0.6" width="2" height="9.2" fill="#a8bcd4"/></svg>
<svg class="a" style="left:637px;top:571.5px" width="7" height="11" viewBox="0 0 7 11"><path d="M0.3 0.6 H6.7 M0.3 9.8 H6.7" stroke="#a8bcd4" stroke-width="1.2"/><rect x="2.5" y="0.6" width="2" height="9.2" fill="#a8bcd4"/></svg>
<svg class="a" style="left:637px;top:587.0px" width="7" height="11" viewBox="0 0 7 11"><path d="M0.3 0.6 H6.7 M0.3 9.8 H6.7" stroke="#a8bcd4" stroke-width="1.2"/><rect x="2.5" y="0.6" width="2" height="9.2" fill="#a8bcd4"/></svg>
<svg class="a" style="left:637px;top:602.5px" width="7" height="11" viewBox="0 0 7 11"><path d="M0.3 0.6 H6.7 M0.3 9.8 H6.7" stroke="#a8bcd4" stroke-width="1.2"/><rect x="2.5" y="0.6" width="2" height="9.2" fill="#a8bcd4"/></svg>
<svg class="a" style="left:637px;top:618.0px" width="7" height="11" viewBox="0 0 7 11"><path d="M0.3 0.6 H6.7 M0.3 9.8 H6.7" stroke="#a8bcd4" stroke-width="1.2"/><rect x="2.5" y="0.6" width="2" height="9.2" fill="#a8bcd4"/></svg>
<div class="a" style="left:1px;top:445.2px;width:631px;height:14px;background:#272727;"></div>
<div class="a" style="left:1px;top:459.2px;width:631px;height:1.5px;background:#212121;"></div>
<div class="a" style="left:1px;top:460.7px;width:631px;height:14px;background:#272727;"></div>
<div class="a" style="left:1px;top:474.7px;width:631px;height:1.5px;background:#212121;"></div>
<div class="a" style="left:1px;top:476.2px;width:631px;height:14px;background:#272727;"></div>
<div class="a" style="left:1px;top:490.2px;width:631px;height:1.5px;background:#212121;"></div>
<div class="a" style="left:1px;top:491.7px;width:631px;height:14px;background:#272727;"></div>
<div class="a" style="left:1px;top:505.7px;width:631px;height:1.5px;background:#212121;"></div>
<div class="a" style="left:1px;top:507.2px;width:631px;height:14px;background:#272727;"></div>
<div class="a" style="left:1px;top:521.2px;width:631px;height:1.5px;background:#212121;"></div>
<div class="a" style="left:1px;top:522.7px;width:631px;height:14px;background:#272727;"></div>
<div class="a" style="left:1px;top:536.7px;width:631px;height:1.5px;background:#212121;"></div>
<div class="a" style="left:1px;top:538.2px;width:631px;height:14px;background:#272727;"></div>
<div class="a" style="left:1px;top:552.2px;width:631px;height:1.5px;background:#212121;"></div>
<div class="a" style="left:1px;top:553.7px;width:631px;height:14px;background:#272727;"></div>
<div class="a" style="left:1px;top:567.7px;width:631px;height:1.5px;background:#212121;"></div>
<div class="a" style="left:1px;top:569.2px;width:631px;height:14px;background:#272727;"></div>
<div class="a" style="left:1px;top:583.2px;width:631px;height:1.5px;background:#212121;"></div>
<div class="a" style="left:1px;top:584.7px;width:631px;height:14px;background:#272727;"></div>
<div class="a" style="left:1px;top:598.7px;width:631px;height:1.5px;background:#212121;"></div>
<div class="a" style="left:1px;top:600.2px;width:631px;height:14px;background:#272727;"></div>
<div class="a" style="left:1px;top:614.2px;width:631px;height:1.5px;background:#212121;"></div>
<div class="a" style="left:1px;top:615.7px;width:631px;height:14px;background:#272727;"></div>
<div class="a" style="left:1px;top:629.7px;width:631px;height:1.5px;background:#212121;"></div>
<svg class="a" style="left:22px;top:450px" width="7" height="7" viewBox="0 0 7 7"><path d="M0 0.3 L6.2 0.3 L3.1 6.4Z" fill="#cfcfcf"/></svg>
<div class="t" style="left:36.6px;top:449.08px;font-size:10.3px;color:#acacac;letter-spacing:-0.588px;">Masks</div>
<svg class="a" style="left:37.8px;top:465.5px" width="7" height="7" viewBox="0 0 7 7"><path d="M0 0.3 L6.2 0.3 L3.1 6.4Z" fill="#cfcfcf"/></svg>
<div class="a" style="left:50.4px;top:463.4px;width:9px;height:9px;background:#000;"></div>
<div class="t" style="left:67px;top:464.58px;font-size:10.3px;color:#acacac;letter-spacing:-0.761px;">Mask 1</div>
<svg class="a" style="left:65.7px;top:477.6px" width="11" height="13" viewBox="0 0 11 13"><circle cx="5.2" cy="7.3" r="4.2" fill="none" stroke="#c0c0c0" stroke-width="1.2"/><path d="M3.5 0.8 H7 M5.2 0.8 V3" stroke="#c0c0c0" stroke-width="1.2"/><path d="M8.5 2.8 L9.6 1.7" stroke="#c0c0c0" stroke-width="1.1"/></svg>
<div class="t" style="left:82.4px;top:480.08px;font-size:10.3px;color:#acacac;letter-spacing:-0.382px;">Mask Path</div>
<svg class="a" style="left:65.7px;top:493.1px" width="11" height="13" viewBox="0 0 11 13"><circle cx="5.2" cy="7.3" r="4.2" fill="none" stroke="#c0c0c0" stroke-width="1.2"/><path d="M3.5 0.8 H7 M5.2 0.8 V3" stroke="#c0c0c0" stroke-width="1.2"/><path d="M8.5 2.8 L9.6 1.7" stroke="#c0c0c0" stroke-width="1.1"/></svg>
<div class="t" style="left:82.4px;top:495.58px;font-size:10.3px;color:#acacac;letter-spacing:-0.359px;">Mask Feather</div>
<svg class="a" style="left:65.7px;top:508.59999999999997px" width="11" height="13" viewBox="0 0 11 13"><circle cx="5.2" cy="7.3" r="4.2" fill="none" stroke="#c0c0c0" stroke-width="1.2"/><path d="M3.5 0.8 H7 M5.2 0.8 V3" stroke="#c0c0c0" stroke-width="1.2"/><path d="M8.5 2.8 L9.6 1.7" stroke="#c0c0c0" stroke-width="1.1"/></svg>
<div class="t" style="left:82.4px;top:511.08px;font-size:10.3px;color:#acacac;letter-spacing:-0.261px;">Mask Opacity</div>
<svg class="a" style="left:65.7px;top:524.0999999999999px" width="11" height="13" viewBox="0 0 11 13"><circle cx="5.2" cy="7.3" r="4.2" fill="none" stroke="#c0c0c0" stroke-width="1.2"/><path d="M3.5 0.8 H7 M5.2 0.8 V3" stroke="#c0c0c0" stroke-width="1.2"/><path d="M8.5 2.8 L9.6 1.7" stroke="#c0c0c0" stroke-width="1.1"/></svg>
<div class="t" style="left:82.4px;top:526.58px;font-size:10.3px;color:#acacac;letter-spacing:-0.312px;">Mask Expansion</div>
<svg class="a" style="left:37.8px;top:543.5px" width="7" height="7" viewBox="0 0 7 7"><path d="M0 0.3 L6.2 0.3 L3.1 6.4Z" fill="#cfcfcf"/></svg>
<div class="a" style="left:50.4px;top:541px;width:9px;height:9px;background:#7b84e0;"></div>
<div class="t" style="left:67px;top:542.08px;font-size:10.3px;color:#acacac;letter-spacing:-0.641px;">Mask 2</div>
<svg class="a" style="left:65.7px;top:555.0999999999999px" width="11" height="13" viewBox="0 0 11 13"><circle cx="5.2" cy="7.3" r="4.2" fill="none" stroke="#c0c0c0" stroke-width="1.2"/><path d="M3.5 0.8 H7 M5.2 0.8 V3" stroke="#c0c0c0" stroke-width="1.2"/><path d="M8.5 2.8 L9.6 1.7" stroke="#c0c0c0" stroke-width="1.1"/></svg>
<div class="t" style="left:82.4px;top:557.58px;font-size:10.3px;color:#acacac;letter-spacing:-0.382px;">Mask Path</div>
<svg class="a" style="left:65.7px;top:570.5999999999999px" width="11" height="13" viewBox="0 0 11 13"><circle cx="5.2" cy="7.3" r="4.2" fill="none" stroke="#c0c0c0" stroke-width="1.2"/><path d="M3.5 0.8 H7 M5.2 0.8 V3" stroke="#c0c0c0" stroke-width="1.2"/><path d="M8.5 2.8 L9.6 1.7" stroke="#c0c0c0" stroke-width="1.1"/></svg>
<div class="t" style="left:82.4px;top:573.08px;font-size:10.3px;color:#acacac;letter-spacing:-0.359px;">Mask Feather</div>
<svg class="a" style="left:65.7px;top:586.0999999999999px" width="11" height="13" viewBox="0 0 11 13"><circle cx="5.2" cy="7.3" r="4.2" fill="none" stroke="#c0c0c0" stroke-width="1.2"/><path d="M3.5 0.8 H7 M5.2 0.8 V3" stroke="#c0c0c0" stroke-width="1.2"/><path d="M8.5 2.8 L9.6 1.7" stroke="#c0c0c0" stroke-width="1.1"/></svg>
<div class="t" style="left:82.4px;top:588.58px;font-size:10.3px;color:#acacac;letter-spacing:-0.261px;">Mask Opacity</div>
<svg class="a" style="left:65.7px;top:601.5999999999999px" width="11" height="13" viewBox="0 0 11 13"><circle cx="5.2" cy="7.3" r="4.2" fill="none" stroke="#c0c0c0" stroke-width="1.2"/><path d="M3.5 0.8 H7 M5.2 0.8 V3" stroke="#c0c0c0" stroke-width="1.2"/><path d="M8.5 2.8 L9.6 1.7" stroke="#c0c0c0" stroke-width="1.1"/></svg>
<div class="t" style="left:82.4px;top:604.08px;font-size:10.3px;color:#acacac;letter-spacing:-0.312px;">Mask Expansion</div>
<svg class="a" style="left:20.8px;top:619px" width="7" height="7" viewBox="0 0 7 7"><path d="M0.5 0.3 L6.8 3.5 L0.5 6.7Z" fill="#cfcfcf"/></svg>
<div class="t" style="left:36.6px;top:619.58px;font-size:10.3px;color:#acacac;letter-spacing:0.007px;">Transform</div>
<div class="a" style="left:342.8px;top:461.3px;width:12.6px;height:11.7px;background:#1c1c1c;"></div>
<svg class="a" style="left:376.4px;top:476.6px" width="11" height="11" viewBox="0 0 11 11"><path d="M7.85 1.43 L8.55 2.01 L9.11 2.70 L9.53 3.47 L9.78 4.30 L9.87 5.16 L9.79 6.00 L9.56 6.79 L9.17 7.52 L8.67 8.15 L8.06 8.66 L7.37 9.04 L6.64 9.27 L5.89 9.36 L5.14 9.30 L4.43 9.10 L3.79 8.77 L3.23 8.33 L2.78 7.80 L2.44 7.20 L2.23 6.56 L2.15 5.90 L2.20 5.26 L2.37 4.64 L2.65 4.09 L3.03 3.60 L3.48 3.21 L3.99 2.92 L4.54 2.74 L5.10 2.67 L5.65 2.70 L6.17 2.85 L6.64 3.08 L7.05 3.40 L7.37 3.78 L7.62 4.20 L7.77 4.66 L7.83 5.12 L7.79 5.57 L7.67 6.00 L7.48 6.38 L7.22 6.71 L6.91 6.97 L6.57 7.16 L6.20 7.28 L5.84 7.32 L5.48 7.29 L5.15 7.19 L4.86 7.03 L4.61 6.83 L4.42 6.58 L4.28 6.32 L4.20 6.05 L4.18 5.77 L4.22 5.51 L4.30 5.28 L4.43 5.08 L4.58 4.91 L4.76 4.79 L4.95 4.71 L5.13 4.68" fill="none" stroke="#b0b0b0" stroke-width="1.2"/></svg>
<svg class="a" style="left:376.4px;top:492.1px" width="11" height="11" viewBox="0 0 11 11"><path d="M7.85 1.43 L8.55 2.01 L9.11 2.70 L9.53 3.47 L9.78 4.30 L9.87 5.16 L9.79 6.00 L9.56 6.79 L9.17 7.52 L8.67 8.15 L8.06 8.66 L7.37 9.04 L6.64 9.27 L5.89 9.36 L5.14 9.30 L4.43 9.10 L3.79 8.77 L3.23 8.33 L2.78 7.80 L2.44 7.20 L2.23 6.56 L2.15 5.90 L2.20 5.26 L2.37 4.64 L2.65 4.09 L3.03 3.60 L3.48 3.21 L3.99 2.92 L4.54 2.74 L5.10 2.67 L5.65 2.70 L6.17 2.85 L6.64 3.08 L7.05 3.40 L7.37 3.78 L7.62 4.20 L7.77 4.66 L7.83 5.12 L7.79 5.57 L7.67 6.00 L7.48 6.38 L7.22 6.71 L6.91 6.97 L6.57 7.16 L6.20 7.28 L5.84 7.32 L5.48 7.29 L5.15 7.19 L4.86 7.03 L4.61 6.83 L4.42 6.58 L4.28 6.32 L4.20 6.05 L4.18 5.77 L4.22 5.51 L4.30 5.28 L4.43 5.08 L4.58 4.91 L4.76 4.79 L4.95 4.71 L5.13 4.68" fill="none" stroke="#b0b0b0" stroke-width="1.2"/></svg>
<svg class="a" style="left:376.4px;top:507.59999999999997px" width="11" height="11" viewBox="0 0 11 11"><path d="M7.85 1.43 L8.55 2.01 L9.11 2.70 L9.53 3.47 L9.78 4.30 L9.87 5.16 L9.79 6.00 L9.56 6.79 L9.17 7.52 L8.67 8.15 L8.06 8.66 L7.37 9.04 L6.64 9.27 L5.89 9.36 L5.14 9.30 L4.43 9.10 L3.79 8.77 L3.23 8.33 L2.78 7.80 L2.44 7.20 L2.23 6.56 L2.15 5.90 L2.20 5.26 L2.37 4.64 L2.65 4.09 L3.03 3.60 L3.48 3.21 L3.99 2.92 L4.54 2.74 L5.10 2.67 L5.65 2.70 L6.17 2.85 L6.64 3.08 L7.05 3.40 L7.37 3.78 L7.62 4.20 L7.77 4.66 L7.83 5.12 L7.79 5.57 L7.67 6.00 L7.48 6.38 L7.22 6.71 L6.91 6.97 L6.57 7.16 L6.20 7.28 L5.84 7.32 L5.48 7.29 L5.15 7.19 L4.86 7.03 L4.61 6.83 L4.42 6.58 L4.28 6.32 L4.20 6.05 L4.18 5.77 L4.22 5.51 L4.30 5.28 L4.43 5.08 L4.58 4.91 L4.76 4.79 L4.95 4.71 L5.13 4.68" fill="none" stroke="#b0b0b0" stroke-width="1.2"/></svg>
<svg class="a" style="left:376.4px;top:523.0999999999999px" width="11" height="11" viewBox="0 0 11 11"><path d="M7.85 1.43 L8.55 2.01 L9.11 2.70 L9.53 3.47 L9.78 4.30 L9.87 5.16 L9.79 6.00 L9.56 6.79 L9.17 7.52 L8.67 8.15 L8.06 8.66 L7.37 9.04 L6.64 9.27 L5.89 9.36 L5.14 9.30 L4.43 9.10 L3.79 8.77 L3.23 8.33 L2.78 7.80 L2.44 7.20 L2.23 6.56 L2.15 5.90 L2.20 5.26 L2.37 4.64 L2.65 4.09 L3.03 3.60 L3.48 3.21 L3.99 2.92 L4.54 2.74 L5.10 2.67 L5.65 2.70 L6.17 2.85 L6.64 3.08 L7.05 3.40 L7.37 3.78 L7.62 4.20 L7.77 4.66 L7.83 5.12 L7.79 5.57 L7.67 6.00 L7.48 6.38 L7.22 6.71 L6.91 6.97 L6.57 7.16 L6.20 7.28 L5.84 7.32 L5.48 7.29 L5.15 7.19 L4.86 7.03 L4.61 6.83 L4.42 6.58 L4.28 6.32 L4.20 6.05 L4.18 5.77 L4.22 5.51 L4.30 5.28 L4.43 5.08 L4.58 4.91 L4.76 4.79 L4.95 4.71 L5.13 4.68" fill="none" stroke="#b0b0b0" stroke-width="1.2"/></svg>
<div class="a" style="left:177px;top:540px;width:59px;height:14px;background:#2e2e2e;"></div>
<div class="t" style="left:184px;top:540.58px;font-size:10.3px;color:#b0b0b0;letter-spacing:-0.394px;">Subtract</div>
<svg class="a" style="left:224.5px;top:543.6px" width="7" height="5" viewBox="0 0 7 5"><path d="M0.5 0.6 L3.2 3.3 L5.9 0.6" fill="none" stroke="#a8a8a8" stroke-width="0.9"/></svg>
<div class="a" style="left:239px;top:540px;width:11px;height:13px;background:#1c1c1c;"></div>
<div class="t" style="left:254px;top:540.58px;font-size:10.3px;color:#a4a4a4;letter-spacing:-0.174px;">Inverted</div>
<div class="a" style="left:343px;top:540px;width:11px;height:13px;background:#1c1c1c;"></div>
<div class="t" style="left:178px;top:557.58px;font-size:10.3px;color:#4a86d0;letter-spacing:-0.766px;">Shape...</div>
<svg class="a" style="left:177px;top:572px" width="11" height="7" viewBox="0 0 11 7"><path d="M4.3 1 H3 Q0.8 1 0.8 3.5 Q0.8 6 3 6 H4.3 M6.7 1 H8 Q10.2 1 10.2 3.5 Q10.2 6 8 6 H6.7 M3.5 3.5 H7.5" fill="none" stroke="#c8c8c8" stroke-width="1.3"/></svg>
<div class="t" style="left:193px;top:573.08px;font-size:10.3px;color:#4a86d0;letter-spacing:-0.083px;">0.0,0.0</div>
<div class="t" style="left:228px;top:573.08px;font-size:10.3px;color:#a8a8a8;letter-spacing:-0.466px;">pixels</div>
<div class="t" style="left:177.6px;top:588.58px;font-size:10.3px;color:#4a86d0;letter-spacing:-1.394px;">100</div>
<div class="t" style="left:192px;top:588.58px;font-size:10.3px;color:#a8a8a8;letter-spacing:0.844px;">%</div>
<div class="t" style="left:177.6px;top:604.08px;font-size:10.3px;color:#4a86d0;letter-spacing:-0.464px;">0.0</div>
<div class="t" style="left:195px;top:604.08px;font-size:10.3px;color:#a8a8a8;letter-spacing:-0.466px;">pixels</div>
<div class="t" style="left:177.6px;top:619.58px;font-size:10.3px;color:#4a86d0;letter-spacing:-0.877px;">Reset</div>
<svg class="a" style="left:376.4px;top:554.0999999999999px" width="11" height="11" viewBox="0 0 11 11"><path d="M7.85 1.43 L8.55 2.01 L9.11 2.70 L9.53 3.47 L9.78 4.30 L9.87 5.16 L9.79 6.00 L9.56 6.79 L9.17 7.52 L8.67 8.15 L8.06 8.66 L7.37 9.04 L6.64 9.27 L5.89 9.36 L5.14 9.30 L4.43 9.10 L3.79 8.77 L3.23 8.33 L2.78 7.80 L2.44 7.20 L2.23 6.56 L2.15 5.90 L2.20 5.26 L2.37 4.64 L2.65 4.09 L3.03 3.60 L3.48 3.21 L3.99 2.92 L4.54 2.74 L5.10 2.67 L5.65 2.70 L6.17 2.85 L6.64 3.08 L7.05 3.40 L7.37 3.78 L7.62 4.20 L7.77 4.66 L7.83 5.12 L7.79 5.57 L7.67 6.00 L7.48 6.38 L7.22 6.71 L6.91 6.97 L6.57 7.16 L6.20 7.28 L5.84 7.32 L5.48 7.29 L5.15 7.19 L4.86 7.03 L4.61 6.83 L4.42 6.58 L4.28 6.32 L4.20 6.05 L4.18 5.77 L4.22 5.51 L4.30 5.28 L4.43 5.08 L4.58 4.91 L4.76 4.79 L4.95 4.71 L5.13 4.68" fill="none" stroke="#b0b0b0" stroke-width="1.2"/></svg>
<svg class="a" style="left:376.4px;top:569.5999999999999px" width="11" height="11" viewBox="0 0 11 11"><path d="M7.85 1.43 L8.55 2.01 L9.11 2.70 L9.53 3.47 L9.78 4.30 L9.87 5.16 L9.79 6.00 L9.56 6.79 L9.17 7.52 L8.67 8.15 L8.06 8.66 L7.37 9.04 L6.64 9.27 L5.89 9.36 L5.14 9.30 L4.43 9.10 L3.79 8.77 L3.23 8.33 L2.78 7.80 L2.44 7.20 L2.23 6.56 L2.15 5.90 L2.20 5.26 L2.37 4.64 L2.65 4.09 L3.03 3.60 L3.48 3.21 L3.99 2.92 L4.54 2.74 L5.10 2.67 L5.65 2.70 L6.17 2.85 L6.64 3.08 L7.05 3.40 L7.37 3.78 L7.62 4.20 L7.77 4.66 L7.83 5.12 L7.79 5.57 L7.67 6.00 L7.48 6.38 L7.22 6.71 L6.91 6.97 L6.57 7.16 L6.20 7.28 L5.84 7.32 L5.48 7.29 L5.15 7.19 L4.86 7.03 L4.61 6.83 L4.42 6.58 L4.28 6.32 L4.20 6.05 L4.18 5.77 L4.22 5.51 L4.30 5.28 L4.43 5.08 L4.58 4.91 L4.76 4.79 L4.95 4.71 L5.13 4.68" fill="none" stroke="#b0b0b0" stroke-width="1.2"/></svg>
<svg class="a" style="left:376.4px;top:585.0999999999999px" width="11" height="11" viewBox="0 0 11 11"><path d="M7.85 1.43 L8.55 2.01 L9.11 2.70 L9.53 3.47 L9.78 4.30 L9.87 5.16 L9.79 6.00 L9.56 6.79 L9.17 7.52 L8.67 8.15 L8.06 8.66 L7.37 9.04 L6.64 9.27 L5.89 9.36 L5.14 9.30 L4.43 9.10 L3.79 8.77 L3.23 8.33 L2.78 7.80 L2.44 7.20 L2.23 6.56 L2.15 5.90 L2.20 5.26 L2.37 4.64 L2.65 4.09 L3.03 3.60 L3.48 3.21 L3.99 2.92 L4.54 2.74 L5.10 2.67 L5.65 2.70 L6.17 2.85 L6.64 3.08 L7.05 3.40 L7.37 3.78 L7.62 4.20 L7.77 4.66 L7.83 5.12 L7.79 5.57 L7.67 6.00 L7.48 6.38 L7.22 6.71 L6.91 6.97 L6.57 7.16 L6.20 7.28 L5.84 7.32 L5.48 7.29 L5.15 7.19 L4.86 7.03 L4.61 6.83 L4.42 6.58 L4.28 6.32 L4.20 6.05 L4.18 5.77 L4.22 5.51 L4.30 5.28 L4.43 5.08 L4.58 4.91 L4.76 4.79 L4.95 4.71 L5.13 4.68" fill="none" stroke="#b0b0b0" stroke-width="1.2"/></svg>
<svg class="a" style="left:376.4px;top:600.5999999999999px" width="11" height="11" viewBox="0 0 11 11"><path d="M7.85 1.43 L8.55 2.01 L9.11 2.70 L9.53 3.47 L9.78 4.30 L9.87 5.16 L9.79 6.00 L9.56 6.79 L9.17 7.52 L8.67 8.15 L8.06 8.66 L7.37 9.04 L6.64 9.27 L5.89 9.36 L5.14 9.30 L4.43 9.10 L3.79 8.77 L3.23 8.33 L2.78 7.80 L2.44 7.20 L2.23 6.56 L2.15 5.90 L2.20 5.26 L2.37 4.64 L2.65 4.09 L3.03 3.60 L3.48 3.21 L3.99 2.92 L4.54 2.74 L5.10 2.67 L5.65 2.70 L6.17 2.85 L6.64 3.08 L7.05 3.40 L7.37 3.78 L7.62 4.20 L7.77 4.66 L7.83 5.12 L7.79 5.57 L7.67 6.00 L7.48 6.38 L7.22 6.71 L6.91 6.97 L6.57 7.16 L6.20 7.28 L5.84 7.32 L5.48 7.29 L5.15 7.19 L4.86 7.03 L4.61 6.83 L4.42 6.58 L4.28 6.32 L4.20 6.05 L4.18 5.77 L4.22 5.51 L4.30 5.28 L4.43 5.08 L4.58 4.91 L4.76 4.79 L4.95 4.71 L5.13 4.68" fill="none" stroke="#b0b0b0" stroke-width="1.2"/></svg>
<div class="a" style="left:175px;top:409.5px;width:123.8px;height:129.8px;background:#0d0d0d;"></div>
<div class="a" style="left:176.1px;top:410.6px;width:121.4px;height:127.3px;background:#eeeeee;border:1px solid #fcfcfc;"></div>
<div class="a" style="left:178.9px;top:448.2px;width:116.1px;height:17px;background:#91c9f7;"></div>
<div class="a" style="left:178.9px;top:448.2px;width:17.1px;height:17px;background:#5eaaf0;"></div>
<svg class="a" style="left:184.5px;top:453.8px" width="7" height="7" viewBox="0 0 7 7"><circle cx="3" cy="3" r="2.7" fill="#1d2f45"/></svg>
<div class="t" style="left:203.7px;top:417.11px;font-size:10.5px;color:#1e1e1e;letter-spacing:0.297px;">None</div>
<div class="t" style="left:203.7px;top:434.91px;font-size:10.5px;color:#1e1e1e;letter-spacing:0.656px;">Add</div>
<div class="t" style="left:203.7px;top:451.91px;font-size:10.5px;color:#1e1e1e;letter-spacing:0.127px;">Subtract</div>
<div class="t" style="left:203.7px;top:469.91px;font-size:10.5px;color:#1e1e1e;letter-spacing:0.152px;">Intersect</div>
<div class="t" style="left:203.7px;top:486.91px;font-size:10.5px;color:#1e1e1e;letter-spacing:0.091px;">Lighten</div>
<div class="t" style="left:203.7px;top:504.61px;font-size:10.5px;color:#1e1e1e;letter-spacing:0.028px;">Darken</div>
<div class="t" style="left:203.7px;top:521.91px;font-size:10.5px;color:#1e1e1e;letter-spacing:0.314px;">Difference</div>
<svg class="a" style="left:0px;top:0px" width="1000" height="632" viewBox="0 0 1000 632"><path d="M296.1 454.3 L303.3 422.7 L312.1 432.1 L333.2 411.1 L339.3 416.6 L318.2 437.7 L327.7 446Z" fill="#1a1a1a" stroke="#f2f2f2" stroke-width="1.8" stroke-linejoin="miter"/></svg>
</body></html>
